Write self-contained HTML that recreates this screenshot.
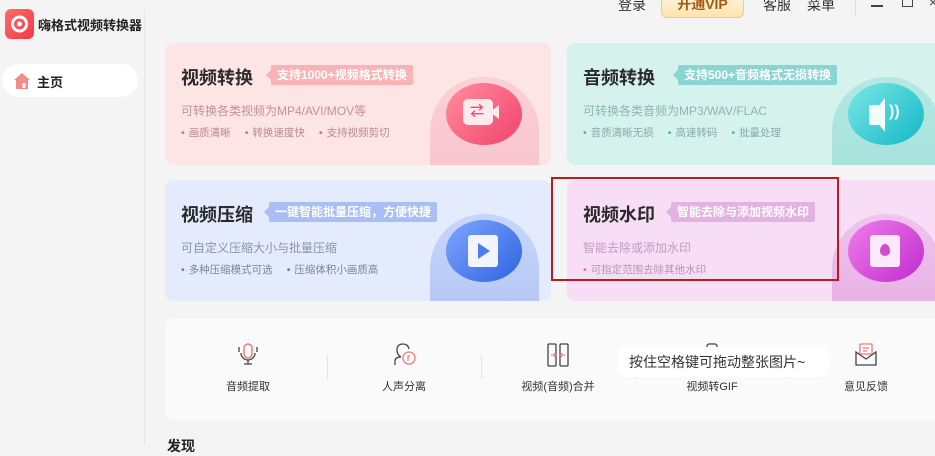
<!DOCTYPE html>
<html><head><meta charset="utf-8"><style>
*{margin:0;padding:0;box-sizing:border-box}
body{width:935px;height:445px;overflow:hidden;background:#f4f4f4;font-family:"Liberation Sans","Noto Sans CJK SC",sans-serif;position:relative;color:#333}
.abs{position:absolute}
.card{position:absolute;border-radius:8px;overflow:hidden}
.t{position:absolute;left:16px;top:21px;font-size:18px;font-weight:bold;color:#2a2a2a}
.tag{position:absolute;top:22px;height:20px;line-height:20px;font-size:12px;font-weight:bold;color:#fff;padding:0 6px;border-radius:2px}
.tag:before{content:"";position:absolute;left:-5px;top:5px;border:5px solid transparent;border-left:0;border-right-color:inherit}
.d{position:absolute;left:16px;top:59px;font-size:12px}
.b{position:absolute;left:16px;top:82px;font-size:10.5px}
.b span{margin-right:14px}
.b i{font-style:normal;margin-right:4px}
.cyl{position:absolute;width:109px;top:34px;height:95px;border-radius:54px 54px 0 0}
.disc{position:absolute;width:76px;height:62px;top:40px;border-radius:50%}
.tool{position:absolute;top:342px;width:100px;text-align:center;font-size:11px;color:#333}
.tool svg{display:block;margin:0 auto 10px}
.sep{position:absolute;top:355px;width:1px;height:24px;background:#e4e4e4}
</style></head><body>
<div class="abs" style="left:144px;top:10px;width:1px;height:435px;background:#e6e6e6"></div>
<div class="abs" style="left:5px;top:9px;width:29px;height:30px;border-radius:6px;background:linear-gradient(135deg,#ff6b6b,#f03a47)"></div>
<svg class="abs" style="left:9px;top:13px" width="21" height="22" viewBox="0 0 21 22"><circle cx="10.5" cy="11" r="7" fill="none" stroke="#fff" stroke-width="3"/><circle cx="10.5" cy="11" r="2.5" fill="#fff"/></svg>
<div class="abs" style="left:38px;top:15px;font-size:13px;font-weight:bold;color:#222">嗨格式视频转换器</div>
<div class="abs" style="left:2px;top:64px;width:136px;height:33px;border-radius:17px;background:#fff"></div>
<svg class="abs" style="left:13px;top:72px" width="18" height="17" viewBox="0 0 18 17"><path d="M1 8 L9 1 L17 8 Z" fill="#f58a8a"/><rect x="3" y="7" width="12" height="10" fill="#f58a8a"/><rect x="9.5" y="11" width="3" height="5" fill="#fff"/></svg>
<div class="abs" style="left:37px;top:72px;font-size:13px;font-weight:bold;color:#222">主页</div>
<div class="abs" style="left:618px;top:-5px;font-size:14px;color:#333">登录</div>
<div class="abs" style="left:661px;top:-8px;width:83px;height:26px;border-radius:6px;border:1px solid #f5c97a;background:linear-gradient(#fff6e3,#ffe2ae);font-size:14px;font-weight:bold;color:#a05a10;text-align:center;line-height:22px">开通VIP</div>
<div class="abs" style="left:763px;top:-5px;font-size:14px;color:#333">客服</div>
<div class="abs" style="left:807px;top:-5px;font-size:14px;color:#333">菜单</div>
<div class="abs" style="left:855px;top:0;width:1px;height:15px;background:#ddd"></div>
<div class="abs" style="left:871px;top:5px;width:12px;height:1.5px;background:#444"></div>
<div class="abs" style="left:902px;top:-2px;width:11px;height:9px;border:1.5px solid #444"></div>
<div class="abs" style="left:929px;top:-6px;font-size:14px;color:#444">×</div>
<!-- card1 -->
<div class="card" style="left:165px;top:43px;width:386px;height:122px;background:#fde4e5">
<div class="t">视频转换</div>
<div class="tag" style="left:106px;background:#f7b3b5;border-color:#f7b3b5">支持1000+视频格式转换</div>
<div class="d" style="color:#c49296">可转换各类视频为MP4/AVI/MOV等</div>
<div class="b" style="color:#b88a8e"><span><i style="color:#f0627a">•</i>画质清晰</span><span><i style="color:#f0627a">•</i>转换速度快</span><span><i style="color:#f0627a">•</i>支持视频剪切</span></div>
<div class="cyl" style="left:265px;background:linear-gradient(#fbd0d6,#f9c6cf 90%)"></div>
<div class="disc" style="left:281px;background:linear-gradient(135deg,#ff8fa0,#f2416a)"></div>
<div class="abs" style="left:298px;top:56px;width:30px;height:26px;border-radius:5px;background:#fdeaec"></div>
<div class="abs" style="left:325px;top:62px;border:7px solid transparent;border-left:0;border-right:9px solid #fdeaec"></div>
<div class="abs" style="left:305px;top:58px;font-size:14px;color:#f0506f;font-weight:bold">⇄</div>
</div>
<!-- card2 -->
<div class="card" style="left:567px;top:43px;width:380px;height:122px;background:#d5f2ec">
<div class="t">音频转换</div>
<div class="tag" style="left:111px;background:#8ad4d2;border-color:#8ad4d2">支持500+音频格式无损转换</div>
<div class="d" style="color:#8db6b0">可转换各类音频为MP3/WAV/FLAC</div>
<div class="b" style="color:#86aca6"><span><i style="color:#27bcc8">•</i>音质清晰无损</span><span><i style="color:#27bcc8">•</i>高速转码</span><span><i style="color:#27bcc8">•</i>批量处理</span></div>
<div class="cyl" style="left:265px;background:linear-gradient(#b4e8e4,#a8e2dc 90%)"></div>
<div class="disc" style="left:281px;background:linear-gradient(135deg,#7ae8e3,#12b8c8)"></div>
<div class="abs" style="left:302px;top:62px;width:16px;height:20px;background:#f2fcfb;border-radius:2px"></div>
<div class="abs" style="left:304px;top:55px;border:17px solid transparent;border-left:0;border-right:14px solid #f2fcfb;height:0"></div>
<div class="abs" style="left:322px;top:60px;font-size:16px;color:#f2fcfb;font-weight:bold">))</div>
</div>
<!-- card3 -->
<div class="card" style="left:165px;top:180px;width:386px;height:121px;background:#e4ebfc">
<div class="t">视频压缩</div>
<div class="tag" style="left:104px;background:#a9bef3;border-color:#a9bef3">一键智能批量压缩，方便快捷</div>
<div class="d" style="color:#8c94a8">可自定义压缩大小与批量压缩</div>
<div class="b" style="color:#7b849b"><span><i style="color:#4d7cf0">•</i>多种压缩模式可选</span><span><i style="color:#4d7cf0">•</i>压缩体积小画质高</span></div>
<div class="cyl" style="left:265px;background:linear-gradient(#c7d5fa,#b6c9f6 90%)"></div>
<div class="disc" style="left:281px;background:linear-gradient(135deg,#7ea6ff,#2f62e0)"></div>
<div class="abs" style="left:303px;top:55px;width:30px;height:32px;border-radius:3px;background:#f2f5ff"></div>
<div class="abs" style="left:313px;top:63px;border:8px solid transparent;border-right:0;border-left:12px solid #4d7cf0"></div>
</div>
<!-- card4 -->
<div class="card" style="left:567px;top:180px;width:380px;height:121px;background:#f7def6">
<div class="t">视频水印</div>
<div class="tag" style="left:104px;background:#e3b2e0;border-color:#e3b2e0">智能去除与添加视频水印</div>
<div class="d" style="color:#c39ac1">智能去除或添加水印</div>
<div class="b" style="color:#b690b4"><span><i style="color:#e35fd8">•</i>可指定范围去除其他水印</span></div>
<div class="cyl" style="left:265px;background:linear-gradient(#f0c4ee,#e8b3e6 90%)"></div>
<div class="disc" style="left:281px;background:linear-gradient(135deg,#f07ee8,#c12bd0)"></div>
<div class="abs" style="left:303px;top:55px;width:30px;height:32px;border-radius:3px;background:#fbe9fa"></div>
<div class="abs" style="left:313px;top:64px;width:10px;height:12px;border-radius:50% 50% 50% 50%/60% 60% 40% 40%;background:#d24ad0"></div>
</div>
<div class="abs" style="left:551px;top:177px;width:288px;height:104px;border:2px solid #b91c1c"></div>
<!-- tools -->
<div class="abs" style="left:165px;top:318px;width:780px;height:102px;border-radius:8px;background:#fafafa"></div>
<div class="tool" style="left:198px">
<svg width="24" height="26" viewBox="0 0 24 26"><rect x="8" y="2" width="8" height="14" rx="4" fill="none" stroke="#f07a7a" stroke-width="1.5"/><path d="M5 11 a7 7 0 0 0 14 0 M12 18 v4 M8 22 h8" fill="none" stroke="#444" stroke-width="1.3"/><path d="M3 5 v5 M21 5 v5" stroke="#444" stroke-width="1.3"/></svg>音频提取</div>
<div class="sep" style="left:327px"></div>
<div class="tool" style="left:354px">
<svg width="26" height="26" viewBox="0 0 26 26"><path d="M4 23 v-4 q0-4 6-4 q-4-2-4-7 q0-6 6-6 q5 0 6 5" fill="none" stroke="#444" stroke-width="1.3"/><circle cx="18" cy="16" r="6" fill="#fff" stroke="#f07a7a" stroke-width="1.3"/><path d="M17 19 v-5 h2" fill="none" stroke="#f07a7a" stroke-width="1.3"/></svg>人声分离</div>
<div class="sep" style="left:481px"></div>
<div class="tool" style="left:508px">
<svg width="26" height="26" viewBox="0 0 26 26"><rect x="3" y="2" width="8" height="22" rx="1" fill="none" stroke="#444" stroke-width="1.3"/><rect x="15" y="2" width="8" height="22" rx="1" fill="none" stroke="#444" stroke-width="1.3"/><path d="M6 13 h5 M15 13 h5 M9 11 l2 2 -2 2 M17 11 l-2 2 2 2" fill="none" stroke="#f07a7a" stroke-width="1.2"/></svg>视频(音频)合并</div>
<div class="sep" style="left:635px"></div>
<div class="tool" style="left:662px">
<svg width="26" height="26" viewBox="0 0 26 26"><rect x="8" y="2" width="10" height="22" rx="2" fill="none" stroke="#444" stroke-width="1.3"/></svg>视频转GIF</div>
<div class="sep" style="left:789px"></div>
<div class="tool" style="left:816px">
<svg width="26" height="26" viewBox="0 0 26 26"><path d="M3 10 v13 h20 v-13 l-10 7 z" fill="none" stroke="#444" stroke-width="1.3"/><rect x="7" y="2" width="12" height="10" rx="1" fill="#fff" stroke="#f07a7a" stroke-width="1.3"/><path d="M10 6 h6 M10 9 h4" stroke="#f07a7a" stroke-width="1.2"/></svg>意见反馈</div>
<div class="abs" style="left:617px;top:347px;width:212px;height:30px;border-radius:10px;background:#fff;font-size:14px;color:#333;line-height:30px;padding-left:12px">按住空格键可拖动整张图片~</div>
<div class="abs" style="left:167px;top:436px;font-size:14px;font-weight:bold;color:#222">发现</div>
</body></html>
